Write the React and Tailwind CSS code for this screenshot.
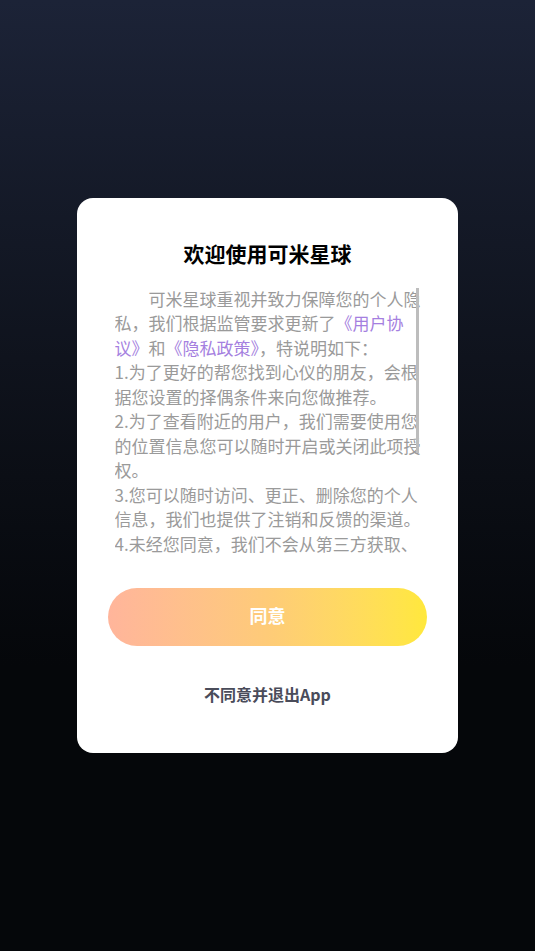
import React from "react";

const POLICY = [
  "1.为了更好的帮您找到心仪的朋友，会根据您设置的择偶条件来向您做推荐。",
  "2.为了查看附近的用户，我们需要使用您的位置信息您可以随时开启或关闭此项授权。",
  "3.您可以随时访问、更正、删除您的个人信息，我们也提供了注销和反馈的渠道。",
  "4.未经您同意，我们不会从第三方获取、共享或向其提供您的信息。",
];

const Link = ({ children }) => <span className="text-[#a57fe0]">{children}</span>;

const PrivacyDialog = () => (
  <div className="flex w-[381px] flex-col items-center rounded-[16px] bg-white pb-[47px] pt-[41px]">
    <h1 className="text-[21px] font-bold leading-[28px] text-black">欢迎使用可米星球</h1>

    <div className="relative mt-[20px] h-[270px] w-[306px] overflow-hidden">
      <div className="text-[17px] leading-[24.45px] text-[#9a9a9a]">
        <p className="indent-[2em]">
          可米星球重视并致力保障您的个人隐私，我们根据监管要求更新了<Link>《用户协议》</Link>和
          <Link>《隐私政策》</Link>，特说明如下：
        </p>
        {POLICY.map((line) => (
          <p key={line}>{line}</p>
        ))}
      </div>
      <span className="absolute right-[2px] top-[1px] h-[165px] w-[3px] bg-[#bdbdbd]" />
    </div>

    <button className="mt-[31px] h-[58px] w-[319px] rounded-full bg-gradient-to-r from-[#ffb59b] via-[#fecb78] to-[#ffe83c] pb-[3px] text-[18px] font-bold text-white">
      同意
    </button>

    <button className="mt-[36px] text-[16px] font-bold leading-[24px] text-[#4a4c5a]">
      不同意并退出App
    </button>
  </div>
);

export default function App() {
  return (
    <div
      className="flex min-h-screen items-center justify-center bg-gradient-to-b from-[#1c2337] via-[#0b0e15] via-50% to-[#05070a] to-70%"
      style={{ fontFamily: '"Noto Sans CJK SC", "Noto Sans", sans-serif' }}
    >
      <PrivacyDialog />
    </div>
  );
}
